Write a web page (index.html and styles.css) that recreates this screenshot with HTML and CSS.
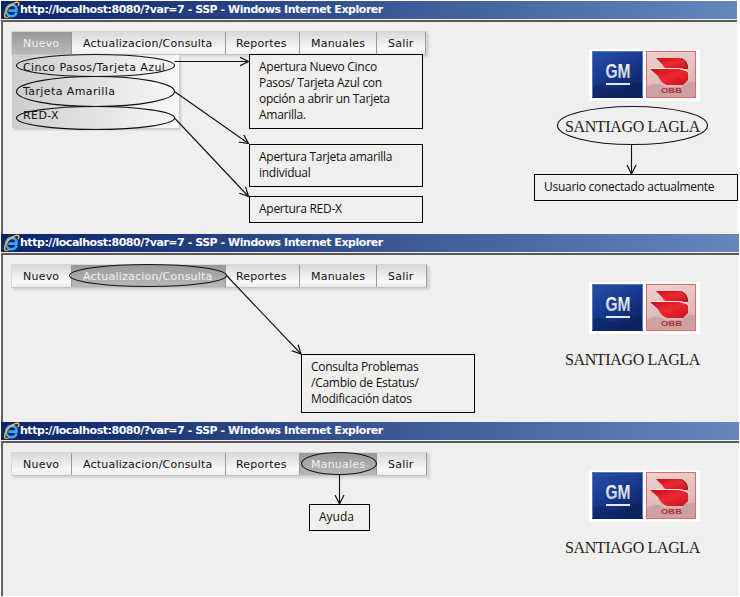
FILE: index.html
```
<!DOCTYPE html>
<html lang="es">
<head>
<meta charset="utf-8">
<title>SSP</title>
<link rel="stylesheet" href="styles.css">
</head>
<body>
<svg class="defs" width="0" height="0" aria-hidden="true">
  <defs>
    <linearGradient id="navy" x2="0.6" y2="1"><stop stop-color="#2850a6"/><stop offset="0.55" stop-color="#18388e"/><stop offset="1" stop-color="#0d2463"/></linearGradient>
    <linearGradient id="rose" x2="0.3" y2="1"><stop stop-color="#ecd3cd"/><stop offset="1" stop-color="#d9b3b0"/></linearGradient>
    <linearGradient id="red" x2="1" y2="1"><stop stop-color="#c4101c"/><stop offset="0.5" stop-color="#ee2832"/><stop offset="1" stop-color="#c51320"/></linearGradient>
    <linearGradient id="silver" x2="0" y2="1"><stop stop-color="#fff"/><stop offset="1" stop-color="#b9c0cf"/></linearGradient>
    <symbol id="ie" viewBox="0 0 17 18">
      <path d="M13.6 11.3C12.8 14 10.7 15.2 8.3 15.2C5.2 15.2 3.1 13 3.1 9.8C3.1 6.3 5.5 3.9 8.8 3.9C12.2 3.9 14 6.3 13.5 9.6H5.4" fill="none" stroke="#3fa5f2" stroke-width="2.6"/>
      <path d="M4.3 7.2C5.2 4.8 8 3.5 10.7 4.2" fill="none" stroke="#8bd4fb" stroke-width="1.2"/>
      <path d="M2.2 16.2C.2 13.5 3.6 6.8 9.2 3.2C12.5 1.1 15.7.5 15.8 2.6C15.9 3.5 15.5 4.3 15 5" fill="none" stroke="#f0bc36" stroke-width="1.5"/>
      <path d="M2.2 16.2C3 17 5 16.2 6.4 15.5" fill="none" stroke="#f0bc36" stroke-width="1.2"/>
    </symbol>
    <symbol id="logos" viewBox="0 0 111 52">
      <rect width="111" height="52" fill="#fff"/>
      <rect x="3" y="2" width="51" height="47" fill="url(#navy)"/>
      <path d="M3 38Q10 34 18 38T35 38Q45 31 54 34V49H3Z" fill="#0c225c" opacity=".55"/>
      <path d="M3.5 48V2.5H53.5V48" fill="none" stroke="#547bc0"/>
      <text class="gm" x="16.500" y="29" textLength="25" lengthAdjust="spacingAndGlyphs" fill="url(#silver)">GM</text>
      <rect x="17" y="34" width="24" height="2" fill="#e4e8f0"/>
      <rect x="57" y="2" width="50" height="47" fill="url(#rose)"/>
      <path d="M57 39Q65 31 76 38H92Q101 30 107 34V49H57Z" fill="#bf9298" opacity=".55"/>
      <rect x="57.500" y="2.500" width="49" height="46" fill="none" stroke="#e2686e"/>
      <path d="M67 9H91Q99 11 99 20H78Q74 18 73 15Z" fill="url(#red)"/>
      <path d="M61 20H90Q95 21 99 22.500V31L94 36H78Q72 34 69 27Z" fill="url(#red)"/>
      <path d="M61 19.500H90Q97 20 100 24" fill="none" stroke="#f8e1dd" stroke-width="1.200"/>
      <path d="M92 9.500Q98 11 98.500 19" fill="none" stroke="#8c1822"/>
      <text class="obb" x="72" y="44" textLength="21" lengthAdjust="spacingAndGlyphs">OBB</text>
    </symbol>
    <marker id="arrow" markerWidth="12" markerHeight="12" refX="9" refY="5" orient="auto" markerUnits="userSpaceOnUse">
      <path d="M0 .5L9 5L0 9.500" fill="none" stroke="#111" stroke-width="1.200"/>
    </marker>
  </defs>
</svg>

<section class="window window-new">
  <header class="titlebar"><svg class="ie"><use href="#ie"/></svg><span>http://localhost:8080/?var=7 - SSP - Windows Internet Explorer</span></header>
  <main class="client">
    <nav class="menu">
      <div class="item nuevo active">Nuevo
        <ul class="submenu"><li>Cinco Pasos/Tarjeta Azul</li><li>Tarjeta Amarilla</li><li>RED-X</li></ul>
      </div>
      <div class="item consulta">Actualizacion/Consulta</div>
      <div class="item reportes">Reportes</div>
      <div class="item manuales">Manuales</div>
      <div class="item salir">Salir</div>
    </nav>
    <aside class="brand"><svg class="logos"><use href="#logos"/></svg><span class="user">SANTIAGO LAGLA</span></aside>
  </main>
</section>

<section class="window window-query">
  <header class="titlebar"><svg class="ie"><use href="#ie"/></svg><span>http://localhost:8080/?var=7 - SSP - Windows Internet Explorer</span></header>
  <main class="client">
    <nav class="menu">
      <div class="item nuevo">Nuevo</div>
      <div class="item consulta active">Actualizacion/Consulta</div>
      <div class="item reportes">Reportes</div>
      <div class="item manuales">Manuales</div>
      <div class="item salir">Salir</div>
    </nav>
    <aside class="brand"><svg class="logos"><use href="#logos"/></svg><span class="user">SANTIAGO LAGLA</span></aside>
  </main>
</section>

<section class="window window-help">
  <header class="titlebar"><svg class="ie"><use href="#ie"/></svg><span>http://localhost:8080/?var=7 - SSP - Windows Internet Explorer</span></header>
  <main class="client">
    <nav class="menu">
      <div class="item nuevo">Nuevo</div>
      <div class="item consulta">Actualizacion/Consulta</div>
      <div class="item reportes">Reportes</div>
      <div class="item manuales active">Manuales</div>
      <div class="item salir">Salir</div>
    </nav>
    <aside class="brand"><svg class="logos"><use href="#logos"/></svg><span class="user">SANTIAGO LAGLA</span></aside>
  </main>
</section>

<div class="callout note-new">Apertura Nuevo Cinco<br>Pasos/ Tarjeta Azul con<br>opción a abrir un Tarjeta<br>Amarilla.</div>
<div class="callout note-yellow">Apertura Tarjeta amarilla<br>individual</div>
<div class="callout note-red">Apertura RED-X</div>
<div class="callout note-user">Usuario conectado actualmente</div>
<div class="callout note-query">Consulta Problemas<br>/Cambio de Estatus/<br>Modificación datos</div>
<div class="callout note-help">Ayuda</div>

<svg class="marks" viewBox="0 0 740 597">
  <g fill="none" stroke="#111" stroke-width="1.100">
    <ellipse cx="95.500" cy="65.500" rx="79" ry="11"/>
    <ellipse cx="95.500" cy="91.500" rx="79" ry="15"/>
    <ellipse cx="95.500" cy="118" rx="79" ry="11.500"/>
    <ellipse cx="632.500" cy="125.500" rx="75" ry="19"/>
    <ellipse cx="148" cy="275.500" rx="78.500" ry="11"/>
    <ellipse cx="339" cy="463.500" rx="37.500" ry="11"/>
    <path d="M174.500 61.500H248.500" marker-end="url(#arrow)"/>
    <path d="M174.500 91.500L248.500 143.500" marker-end="url(#arrow)"/>
    <path d="M174.500 118L248.500 196.500" marker-end="url(#arrow)"/>
    <path d="M631.500 144.500V174" marker-end="url(#arrow)"/>
    <path d="M226.500 275.500L301 354" marker-end="url(#arrow)"/>
    <path d="M339.500 475V504" marker-end="url(#arrow)"/>
  </g>
</svg>
</body>
</html>
```
FILE: styles.css
```
* { box-sizing: border-box; }
body { position: relative; width: 740px; height: 597px; margin: 0; padding: 1px 0 0 1px; overflow: hidden; background: #fff; }
.defs { position: absolute; }
.window { display: flex; flex-direction: column; width: 738px; background: #f0efed; }
.window-new { width: 736px; height: 233px; }
.window-query { height: 188px; }
.window-help { height: 174px; }
.titlebar { display: flex; align-items: center; height: 18px; padding-left: 2px; background: linear-gradient(90deg, #0a246a, #6487bc); color: #fff; font: bold 11px/18px "DejaVu Sans", sans-serif; white-space: nowrap; }
.ie { width: 17px; height: 18px; flex: none; }
.titlebar span { letter-spacing: -0.46px; }
.client { flex: 1; display: flex; justify-content: space-between; align-items: flex-start; margin-top: 1px; padding: 9px 37px 0 9px; border-top: 2px solid #5b5a58; border-left: 2px solid #626262; }
.window-query .client, .window-help .client { padding-right: 39px; padding-left: 8px; }
.menu { display: flex; width: 416px; height: 24px; border: 1px solid #d8d8d8; border-bottom-color: #c4c4c4; box-shadow: 2px 2px 2px #d5d4d2; color: #111; font: 11px/23px "DejaVu Sans", sans-serif; letter-spacing: 0.22px; white-space: nowrap; }
.window-new .menu { margin-left: -1px; }
.window-query .menu, .window-help .menu { width: 417px; }
.item { position: relative; padding-left: 11px; border-right: 1px solid #999; background: linear-gradient(#d9d9d9, #f8f8f8 75%, #eee); }
.nuevo { width: 60px; }
.consulta { width: 154px; }
.reportes { width: 74px; padding-left: 10px; }
.manuales { width: 77px; }
.salir { flex: 1; }
.active { background: linear-gradient(#999, #b9b9b9); color: #f0f0f0; }
.submenu { position: absolute; top: 23px; left: 0; width: 167px; height: 73px; margin: 0; padding: 1px 0 0 11px; list-style: none; color: #111; letter-spacing: 0.4px; line-height: 24px; background: linear-gradient(90deg, #cdcdcd, #f8f8f8); box-shadow: 2px 2px 2px #c9c9c9; }
.brand { display: flex; flex-direction: column; align-items: flex-end; padding-top: 18px; }
.logos { width: 111px; height: 52px; }
.user { margin-top: 16px; color: #222; font: 16px/20px "Liberation Serif", serif; letter-spacing: -0.35px; white-space: nowrap; }
.gm { font: bold 20px "Liberation Sans", sans-serif; }
.obb { fill: #b52a32; font: bold 8px "Liberation Sans", sans-serif; }
.callout { position: absolute; width: 174px; padding: 4px 0 0 9px; border: 1px solid #000; background: #f0efed; color: #111; font: 12px/16px "Open Sans", sans-serif; letter-spacing: -0.27px; white-space: nowrap; }
.note-new { top: 54px; left: 249px; height: 75px; }
.note-yellow { top: 144px; left: 249px; height: 43px; }
.note-red { top: 196px; left: 249px; height: 27px; }
.note-user { top: 174px; left: 534px; width: 204px; height: 27px; }
.note-query { top: 354px; left: 301px; height: 59px; }
.note-help { top: 504px; left: 309px; width: 61px; height: 27px; letter-spacing: 0; }
.marks { position: absolute; top: 0; left: 0; width: 740px; height: 597px; }
```
